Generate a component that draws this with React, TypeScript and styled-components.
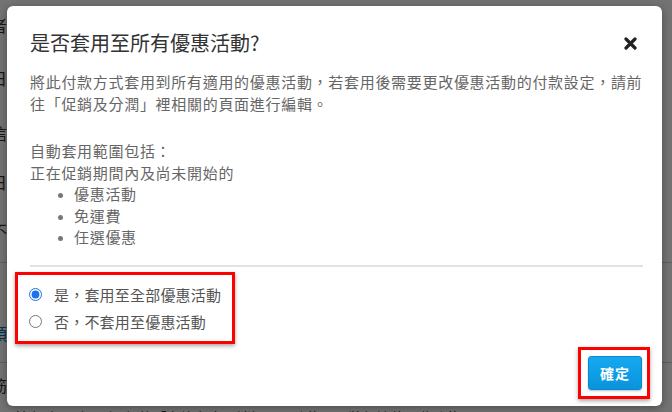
import React, { useState } from 'react';
import styled, { createGlobalStyle } from 'styled-components';

const GlobalStyle = createGlobalStyle`
  html, body {
    margin: 0;
    padding: 0;
    width: 672px;
    height: 412px;
    overflow: hidden;
    font-family: "Noto Sans CJK TC", "Noto Sans", sans-serif;
  }
`;

const Screen = styled.div`
  position: relative;
  width: 672px;
  height: 412px;
  overflow: hidden;
  background: #ffffff;
`;

const BackPage = styled.div`
  display: flex;
  flex-direction: column;
  margin-left: -9px;
`;

const BackRow = styled.div<{ $tall: number; $line?: boolean }>`
  height: ${(p) => p.$tall}px;
  box-sizing: border-box;
  display: flex;
  align-items: center;
  border-bottom: ${(p) => (p.$line ? '1px solid #d0d0d0' : 'none')};
  font-size: 16px;
  color: #333;
  white-space: nowrap;
`;

const BackLink = styled.span`
  color: #0b6fb0;
`;

const BackFooter = styled.div`
  padding-left: 9px;
  padding-top: 1px;
  font-size: 14px;
  line-height: 20px;
  color: #333;
  white-space: nowrap;
`;

const Dim = styled.div`
  position: absolute;
  inset: 0;
  background: rgba(0, 0, 0, 0.55);
`;

const Modal = styled.div`
  position: absolute;
  left: 7px;
  top: 6px;
  width: 655px;
  height: 400px;
  background: #fff;
  border-radius: 6px;
  box-shadow: 0 2px 8px rgba(0, 0, 0, 0.35);
  display: flex;
  flex-direction: column;
  padding: 22px 19px 7px 23px;
  box-sizing: border-box;
`;

const Header = styled.div`
  display: flex;
  align-items: center;
  justify-content: space-between;
  height: 30px;
`;

const Title = styled.h3`
  margin: 0;
  font-size: 20px;
  font-weight: 400;
  color: #333;
  line-height: 30px;
`;

const CloseButton = styled.button`
  border: none;
  background: none;
  padding: 0;
  margin-right: 6px;
  width: 13px;
  height: 13px;
  display: flex;
  cursor: pointer;
`;

const Body = styled.div`
  margin-top: 13px;
  font-size: 15px;
  letter-spacing: 0.7px;
  line-height: 21.5px;
  color: #666;
`;

const Paragraph = styled.p`
  margin: 0 0 26px 0;
  &:last-child {
    margin-bottom: 0;
  }
`;

const ScopeList = styled.ul`
  margin: 0;
  padding-left: 44px;
  li::marker {
    font-size: 12px;
    color: #777;
  }
`;

const Divider = styled.hr`
  border: none;
  border-top: 2px solid #e2e2e2;
  margin: 17px 0 5px 0;
`;

const RadioGroup = styled.div`
  margin-left: -15px;
  width: 220px;
  box-sizing: border-box;
  border: 3px solid #ff0000;
  box-shadow: 0 2px 4px rgba(0, 0, 0, 0.35);
  padding: 8px 0 7px 11px;
  display: flex;
  flex-direction: column;
  gap: 3px;
`;

const RadioRow = styled.label`
  display: flex;
  align-items: center;
  gap: 12px;
  height: 24px;
  font-size: 15px;
  letter-spacing: 0.2px;
  color: #555;
  cursor: pointer;
  input {
    margin: 0;
    width: 13px;
    height: 13px;
    accent-color: #1a73e8;
  }
`;

const Footer = styled.div`
  margin-top: auto;
  display: flex;
  justify-content: flex-end;
`;

const ButtonFrame = styled.div`
  border: 3px solid #ff0000;
  box-shadow: 0 2px 4px rgba(0, 0, 0, 0.35);
  padding: 6px 5px 6px 7px;
  margin-right: -7px;
`;

const ConfirmButton = styled.button`
  width: 54px;
  height: 34px;
  border: 1px solid #0a87cf;
  border-radius: 3px;
  background: linear-gradient(#16a9f0, #0894dd);
  color: #fff;
  font-family: "Noto Sans CJK TC", sans-serif;
  font-size: 14px;
  font-weight: 700;
  letter-spacing: 1px;
  cursor: pointer;
  box-shadow: 0 1px 2px rgba(0, 0, 0, 0.25);
`;

const App = () => {
  const [applyAll, setApplyAll] = useState(true);

  return (
    <Screen>
      <GlobalStyle />
      <BackPage>
        <BackRow $tall={50}>者</BackRow>
        <BackRow $tall={56}>日</BackRow>
        <BackRow $tall={54}>信</BackRow>
        <BackRow $tall={44}>日</BackRow>
        <BackRow $tall={52}>不</BackRow>
        <BackRow $tall={7} $line />
        <BackRow $tall={40} />
        <BackRow $tall={60} $line><BackLink>預</BackLink></BackRow>
        <BackRow $tall={43}>筋</BackRow>
        <BackFooter>
          ：若 <BackLink>設定</BackLink> ＞ <BackLink>訂單設定</BackLink> 的「允許顧客取消訂單」功能開關將無法使用此功能
        </BackFooter>
      </BackPage>
      <Dim />
      <Modal>
        <Header>
          <Title>是否套用至所有優惠活動?</Title>
          <CloseButton aria-label="close">
            <svg width="13" height="13" viewBox="0 0 13 13">
              <path d="M2 2 L11 11 M11 2 L2 11" stroke="#222" strokeWidth="3.2" strokeLinecap="round" />
            </svg>
          </CloseButton>
        </Header>
        <Body>
          <Paragraph>
            將此付款方式套用到所有適用的優惠活動，若套用後需要更改優惠活動的付款設定，請前往「促銷及分潤」裡相關的頁面進行編輯。
          </Paragraph>
          <Paragraph>
            自動套用範圍包括：
            <br />
            正在促銷期間內及尚未開始的
            <ScopeList>
              <li>優惠活動</li>
              <li>免運費</li>
              <li>任選優惠</li>
            </ScopeList>
          </Paragraph>
        </Body>
        <Divider />
        <RadioGroup>
          <RadioRow>
            <input type="radio" name="apply" checked={applyAll} onChange={() => setApplyAll(true)} />
            是，套用至全部優惠活動
          </RadioRow>
          <RadioRow>
            <input type="radio" name="apply" checked={!applyAll} onChange={() => setApplyAll(false)} />
            否，不套用至優惠活動
          </RadioRow>
        </RadioGroup>
        <Footer>
          <ButtonFrame>
            <ConfirmButton>確定</ConfirmButton>
          </ButtonFrame>
        </Footer>
      </Modal>
    </Screen>
  );
};

export default App;
